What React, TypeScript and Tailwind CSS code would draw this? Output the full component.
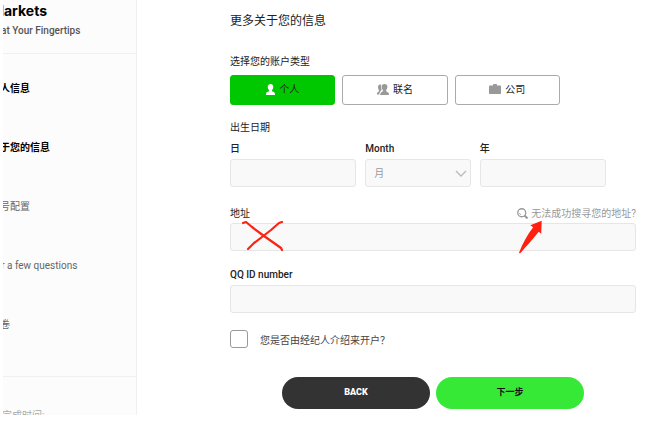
import type { ReactNode } from "react";
import clsx from "clsx";

const STEPS = [
  { label: "个人信息", state: "done" },
  { label: "关于您的信息", state: "done" },
  { label: "账号配置", state: "next" },
  { label: "For a few questions", state: "next" },
  { label: "问卷", state: "next" },
];

function PersonIcon() {
  return (
    <svg viewBox="0 0 18 22" className="h-[11px] w-[9px]" fill="currentColor" aria-hidden="true">
      <path d="M9 0c3.400 0 5.500 2 5.500 5.500 0 3-1 5-2.500 6.500v2c0 1 5 2 5.500 4 .4 1.500.5 4 .5 4H0s.1-2.500.5-4c.5-2 5.500-3 5.500-4v-2C4.500 10.500 3.500 8.500 3.500 5.500 3.500 2 5.600 0 9 0z" />
    </svg>
  );
}

function PeopleIcon() {
  return (
    <svg viewBox="0 0 24 22" className="h-[11px] w-3" fill="currentColor" aria-hidden="true">
      <path d="M15 0c3.600 0 5.800 2 5.800 5.500 0 3-1 5-2.500 6.300v2c0 1 4.700 2.200 5.200 4.500l.5 3.700H6.500s0-2.200.4-3.700c.5-2.300 4.900-3.500 4.900-4.500v-2c-1.500-1.300-2.600-3.300-2.600-6.300C9.200 2 11.400 0 15 0z" />
      <path d="M6.500 1c1 0 1.600.2 2.100.6-1.200 2.800-.9 7.300.9 10-.3 1.500-3.900 2.900-4.600 6.700L4.700 21H0s0-2.500.4-3.500c.5-1.600 3.600-2.600 3.600-3.600v-1.600C2.700 11 2 9 2 6.500 2 3 3.500 1 6.500 1z" />
    </svg>
  );
}

function BriefcaseIcon() {
  return (
    <svg viewBox="0 0 24 20" className="h-[10px] w-3" fill="currentColor" aria-hidden="true">
      <path d="M8 3V1.500C8 .6 8.600 0 9.500 0h5c.9 0 1.500.6 1.500 1.500V3h6c1.200 0 2 .8 2 2v13c0 1.200-.8 2-2 2H2c-1.200 0-2-.8-2-2V5c0-1.200.8-2 2-2z" />
    </svg>
  );
}

function SearchIcon() {
  return (
    <svg viewBox="0 0 22 22" className="h-[11px] w-[11px]" fill="none" stroke="currentColor" aria-hidden="true">
      <circle cx="9.500" cy="9.500" r="8" strokeWidth="2.600" />
      <path d="M5 10a5 5 0 0 0 3 4" strokeWidth="1.500" />
      <path d="M15 15l6 6" strokeWidth="4" />
    </svg>
  );
}

function Sidebar() {
  return (
    <aside className="ml-[3px] w-[134px] shrink-0 self-start overflow-hidden border-r border-[#f0f0f0] bg-[#fcfcfc]">
      <header className="h-[54px] border-b border-[#f0f0f0]">
        <div className="flex h-[22px] w-11 items-center justify-end overflow-hidden font-['Inter'] text-sm font-bold text-black">
          Markets
        </div>
        <p className="-ml-0.5 whitespace-nowrap text-[10px] leading-[18px] font-medium text-[#555]">
          at Your Fingertips
        </p>
      </header>
      <ol className="-ml-[13px] flex flex-col pt-[5px] pb-[22px]">
        {STEPS.map((step) => (
          <li
            key={step.label}
            className={clsx(
              "flex h-[59px] items-center whitespace-nowrap",
              step.state === "done" ? "font-bold text-black" : "text-[#666]",
            )}
          >
            {step.label}
          </li>
        ))}
      </ol>
      <footer className="h-[39px] overflow-hidden border-t border-[#f0f0f0] pt-[31px]">
        <p className="-ml-px whitespace-nowrap leading-4 text-[#aaa]">完成时间:</p>
      </footer>
    </aside>
  );
}

function AccountType({ icon, label, active = false }: { icon: ReactNode; label: string; active?: boolean }) {
  return (
    <button
      type="button"
      aria-pressed={active}
      className={clsx(
        "flex h-[30px] flex-1 items-center justify-center gap-1 rounded-[3px] border pb-0.5",
        active ? "border-[#00c800] bg-[#00c800] text-white" : "border-[#aaa] bg-white text-[#999]",
      )}
    >
      {icon}
      <span className="text-[#222]">{label}</span>
    </button>
  );
}

const FIELD = "block h-7 w-full rounded-[3px] border border-[#e6e6e6] bg-[#f9f9f9] px-2 outline-none";

function Field({ id, label, className }: { id: string; label: string; className?: string }) {
  return (
    <div className={className}>
      <label htmlFor={id} className="block h-5 font-medium leading-5">
        {label}
      </label>
      <input id={id} type="text" className={FIELD} />
    </div>
  );
}

export default function App() {
  return (
    <div
      lang="zh-CN"
      className="flex bg-white font-['Roboto','Noto_Sans_CJK_SC',sans-serif] text-[10px] text-[#222]"
    >
      <Sidebar />
      <main className="min-w-0 flex-1 pr-[29px] pl-[93px]">
        <h1 className="pt-[11px] text-xs leading-5">更多关于您的信息</h1>

        <form onSubmit={(e) => e.preventDefault()}>
          <fieldset className="pt-[21px]">
            <legend className="float-left w-full leading-5">选择您的账户类型</legend>
            <div className="clear-both mr-[76px] flex gap-[7px] pt-[3px]">
              <AccountType active icon={<PersonIcon />} label="个人" />
              <AccountType icon={<PeopleIcon />} label="联名" />
              <AccountType icon={<BriefcaseIcon />} label="公司" />
            </div>
          </fieldset>

          <p className="pt-[13px] leading-5">出生日期</p>
          <div className="mt-px mr-[30px] flex gap-[9px]">
            <Field id="day" label="日" className="flex-6" />
            <div className="flex-5">
              <label htmlFor="month" className="block h-5 font-medium leading-5">
                Month
              </label>
              <div className="relative">
                <select id="month" className={clsx(FIELD, "appearance-none text-[#999]")}>
                  <option>月</option>
                </select>
                <svg
                  viewBox="0 0 12 8"
                  className="pointer-events-none absolute top-[11px] right-1 h-2 w-3"
                  fill="none"
                  stroke="#bbb"
                  strokeWidth="1.400"
                  aria-hidden="true"
                >
                  <path d="M1 1l5 5 5-5" />
                </svg>
              </div>
            </div>
            <Field id="year" label="年" className="flex-6" />
          </div>

          <div className="mt-4">
            <div className="flex h-5 items-center justify-between">
              <label htmlFor="address">地址</label>
              <a href="#address" className="flex items-center gap-[3px] text-[#999]">
                <SearchIcon />
                无法成功搜寻您的地址?
              </a>
            </div>
            <div className="relative">
              <input id="address" type="text" className={FIELD} />
              <svg
                viewBox="0 0 44 32"
                className="pointer-events-none absolute -top-0.5 left-[11px] h-8 w-11"
                fill="none"
                stroke="#fa2314"
                strokeWidth="2.200"
                strokeLinecap="round"
                strokeLinejoin="round"
                aria-hidden="true"
              >
                <path d="M2 2l3-1 6 5 12 9 10 7 7 5 1 2" />
                <path d="M41 1l-3 1-8 7-9 7-8 6-6 6" />
              </svg>
              <svg
                viewBox="0 0 24 34"
                className="pointer-events-none absolute -top-[3px] right-[94px] h-[34px] w-6"
                fill="#ff2010"
                aria-hidden="true"
              >
                <path d="M23.700.7L12.300 5.300l2.900 2C10 14 5 22.500.8 33.300L2.500 33C8 26.500 14.500 19.500 20.700 11.700l2.500 2z" />
              </svg>
            </div>
          </div>

          <Field id="qq" label="QQ ID number" className="mt-3.5" />

          <div className="mt-4 flex items-center gap-3">
            <input
              id="broker"
              type="checkbox"
              className="h-[18px] w-[18px] appearance-none rounded-[3px] border border-[#999] bg-white checked:bg-[#00c800]"
            />
            <label htmlFor="broker" className="pt-1 leading-4 text-[#444]">
              您是否由经纪人介绍来开户？
            </label>
          </div>

          <div className="mt-7 mr-[52px] ml-[52px] flex gap-1.5 text-[9px] font-black">
            <button type="button" className="h-8 flex-1 rounded-full bg-[#333] text-white">
              BACK
            </button>
            <button type="submit" className="h-8 flex-1 rounded-full bg-[#37e937] font-bold text-[#111]">
              下一步
            </button>
          </div>
        </form>
      </main>
    </div>
  );
}
